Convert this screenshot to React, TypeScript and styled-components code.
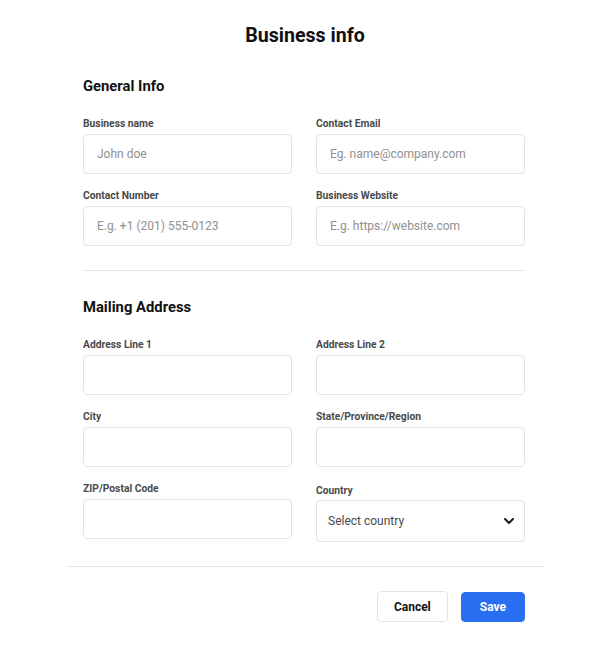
import styled, { createGlobalStyle } from 'styled-components';

const GlobalStyle = createGlobalStyle`
  body {
    margin: 0;
    background: #fff;
    font-family: Roboto, "Liberation Sans", sans-serif;
    color: #111;
  }
  * { box-sizing: border-box; }
`;

const Chevron = () => (
  <svg width="12" height="8" viewBox="0 0 12 8" fill="none" stroke="#1a1a1a" strokeWidth="2" strokeLinecap="round" strokeLinejoin="round">
    <path d="M2 2l4 4 4-4" />
  </svg>
);

// ========== STYLES ==========

const Modal = styled.div`
  width: 476px;
  margin: 0 auto;
  padding-top: 24px;
`;

const Title = styled.h1`
  margin: 0;
  font-size: 19.6px;
  line-height: 24px;
  font-weight: 700;
  text-align: center;
  color: #111;
`;

const Body = styled.div`
  padding: 0 17px 0 16px;
`;

const Section = styled.section<{ $top: number }>`
  margin-top: ${p => p.$top}px;
`;

const SectionTitle = styled.h2`
  margin: 0 0 20px;
  font-size: 14.8px;
  line-height: 20px;
  font-weight: 700;
  color: #111;
`;

const Grid = styled.div`
  display: grid;
  grid-template-columns: 209px 209px;
  column-gap: 24px;
  row-gap: 14px;
`;

const Field = styled.div<{ $shift?: number; $gap?: number }>`
  display: flex;
  flex-direction: column;
  gap: ${p => p.$gap ?? 3}px;
  margin-top: ${p => p.$shift ?? 0}px;
`;

const Label = styled.label`
  font-size: 10.3px;
  line-height: 15px;
  font-weight: 700;
  color: #4a4a4a;
`;

const Input = styled.input`
  height: 40px;
  width: 100%;
  border: 1px solid #e3e3e3;
  border-radius: 4px;
  padding: 0 13px;
  font-family: inherit;
  font-size: 12px;
  color: #222;
  outline: none;

  &::placeholder {
    color: #8f8f8f;
  }
`;

const SelectBox = styled.div`
  height: 42px;
  border: 1px solid #e3e3e3;
  border-radius: 4px;
  padding: 0 9px 0 11px;
  display: flex;
  align-items: center;
  justify-content: space-between;
  font-size: 12px;
  color: #4a4a4a;
`;

const Divider = styled.hr`
  margin: 24px 0 0;
  border: none;
  border-top: 1px solid #e6e6e6;
`;

const FooterRule = styled.hr`
  margin: 24px 0 0;
  border: none;
  border-top: 1px solid #e3e3e3;
`;

const Footer = styled.div`
  display: flex;
  justify-content: flex-end;
  align-items: center;
  gap: 13px;
  padding: 24px 18px 0 0;
`;

const Button = styled.button<{ $primary?: boolean }>`
  height: ${p => (p.$primary ? 30 : 31)}px;
  padding: 0 ${p => (p.$primary ? 18 : 16)}px;
  border-radius: 4px;
  font-family: inherit;
  font-size: 12px;
  font-weight: 700;
  cursor: pointer;
  border: 1px solid ${p => (p.$primary ? '#2a6ef2' : '#e3e3e3')};
  background: ${p => (p.$primary ? '#2a6ef2' : '#fff')};
  color: ${p => (p.$primary ? '#fff' : '#111')};
`;

// ========== COMPONENT ==========

export default function App() {
  return (
    <>
      <GlobalStyle />
      <Modal>
        <Title>Business info</Title>
        <Body>
          <Section $top={28}>
            <SectionTitle>General Info</SectionTitle>
            <Grid>
              <Field>
                <Label>Business name</Label>
                <Input placeholder="John doe" />
              </Field>
              <Field>
                <Label>Contact Email</Label>
                <Input placeholder="Eg. name@company.com" />
              </Field>
              <Field>
                <Label>Contact Number</Label>
                <Input placeholder="E.g. +1 (201) 555-0123" />
              </Field>
              <Field>
                <Label>Business Website</Label>
                <Input placeholder="E.g. https://website.com" />
              </Field>
            </Grid>
            <Divider />
          </Section>

          <Section $top={26}>
            <SectionTitle>Mailing Address</SectionTitle>
            <Grid>
              <Field>
                <Label>Address Line 1</Label>
                <Input />
              </Field>
              <Field>
                <Label>Address Line 2</Label>
                <Input />
              </Field>
              <Field>
                <Label>City</Label>
                <Input />
              </Field>
              <Field>
                <Label>State/Province/Region</Label>
                <Input />
              </Field>
              <Field>
                <Label>ZIP/Postal Code</Label>
                <Input />
              </Field>
              <Field $shift={2} $gap={2}>
                <Label>Country</Label>
                <SelectBox>
                  <span>Select country</span>
                  <Chevron />
                </SelectBox>
              </Field>
            </Grid>
          </Section>
        </Body>
        <FooterRule />
        <Footer>
          <Button>Cancel</Button>
          <Button $primary>Save</Button>
        </Footer>
      </Modal>
    </>
  );
}
